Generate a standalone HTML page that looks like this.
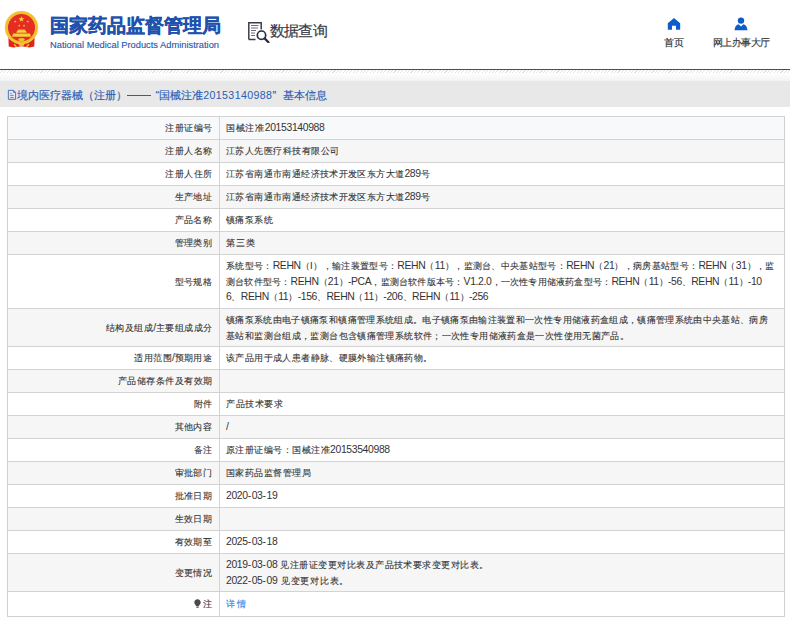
<!DOCTYPE html>
<html><head><meta charset="utf-8">
<style>
*{box-sizing:border-box;margin:0;padding:0}
html,body{width:790px;height:620px;overflow:hidden;background:#fff;font-family:"Liberation Sans",sans-serif;color:#333}
.hdr{position:absolute;left:0;top:0;width:790px;height:69px;background:#fff}
.emb{position:absolute;left:0;top:0;width:45px;height:55px}
.t1{position:absolute;left:50px;top:12.5px;font-size:19px;font-weight:bold;color:#1f52ad;-webkit-text-stroke:0.35px #1f52ad;white-space:nowrap;line-height:26px}
.t2{position:absolute;left:50px;top:38.6px;font-size:9.3px;color:#2a5bb0;-webkit-text-stroke:0.15px #2a5bb0;white-space:nowrap;line-height:12px}
.dq{position:absolute;left:248px;top:22px;width:22px;height:21px}
.dqt{position:absolute;left:270px;top:20px;font-size:14.5px;letter-spacing:-0.8px;color:#3a3a46;-webkit-text-stroke:0.2px #3a3a46;white-space:nowrap;line-height:22px}
.nav{position:absolute;font-size:10px;color:#333;-webkit-text-stroke:0.15px #333;white-space:nowrap;line-height:10px}
.bl{position:absolute;left:0;top:69px;width:790px;height:1px;background:#0a5cb8}
.hatch{position:absolute;left:0;top:70px;width:790px;height:3px;background:repeating-linear-gradient(135deg,#fff 0,#fff 1.6px,#e2e2e2 1.6px,#e2e2e2 2.4px)}
.grad{position:absolute;left:0;top:73px;width:790px;height:8px;background:linear-gradient(#fff,#f3f3f3)}
.bar{position:absolute;left:0;top:81px;width:790px;height:26px;background:#e8e8e8}
.crumb{position:absolute;top:87px;font-size:11px;color:#2a5db5;-webkit-text-stroke:0.15px #2a5db5;white-space:nowrap;line-height:16px}
.cn{font-size:10.6px;letter-spacing:0.4px;-webkit-text-stroke:0}
.dicon{position:absolute;left:7px;top:89px;width:10px;height:12px}
.tbl{position:absolute;left:7px;top:116px;width:778px;height:501px;border-left:1px solid #d0d0d0;border-right:1px solid #d0d0d0;font-size:9.4px;color:#333;-webkit-text-stroke:0.1px #333}
.row{position:absolute;left:0;width:776px;border-top:1px solid #d3d3d3;display:flex;align-items:center}
.lc{width:212px;flex:none;text-align:right;padding-right:7.6px;letter-spacing:0.45px;line-height:15.6px;white-space:nowrap}
.rc{padding-left:6px;white-space:nowrap}
.ln{line-height:15.6px;height:15.6px}
.n{font-size:10.4px;letter-spacing:-0.35px;-webkit-text-stroke:0}
.h{letter-spacing:0.5px}
.bot{position:absolute;left:0;top:500px;width:776px;height:1px;background:#d0d0d0}
.vl{position:absolute;left:211px;top:0;width:1px;height:500px;background:#d3d3d3}
.bulb{display:inline-block;vertical-align:-1px;margin-right:1.5px}
a{color:#3c8ce8;text-decoration:none;-webkit-text-stroke:0.2px #3c8ce8}
</style></head><body>
<div class="hdr">
  <svg class="emb" viewBox="0 0 45 55">
    <path d="M8.4 36.5 L34.6 36.5 L34.3 46.6 L29.5 47.4 L21.5 46.2 L13.5 47.4 L8.7 46.6 Z" fill="#e0241b"/>
    <circle cx="21.5" cy="27.6" r="14" fill="#e52e22"/>
    <circle cx="21.5" cy="27.6" r="15.1" fill="none" stroke="#f0bf2c" stroke-width="3.1"/>
    <circle cx="21.5" cy="27.6" r="16.4" fill="none" stroke="#f8d460" stroke-width="0.6"/>
    <path d="M8.4 36.5 L34.6 36.5 L34.4 41 Q21.5 47 8.6 41 Z" fill="#e0241b" opacity="0"/>
    <path d="M21.40,16.20 L22.13,18.29 L24.35,18.34 L22.59,19.69 L23.22,21.81 L21.40,20.55 L19.58,21.81 L20.21,19.69 L18.45,18.34 L20.67,18.29Z" fill="#f5d13c"/>
    <path d="M15.30,20.15 L15.62,21.06 L16.58,21.08 L15.82,21.67 L16.09,22.59 L15.30,22.05 L14.51,22.59 L14.78,21.67 L14.02,21.08 L14.98,21.06Z" fill="#f5d13c"/>
    <path d="M27.80,20.15 L28.12,21.06 L29.08,21.08 L28.32,21.67 L28.59,22.59 L27.80,22.05 L27.01,22.59 L27.28,21.67 L26.52,21.08 L27.48,21.06Z" fill="#f5d13c"/>
    <path d="M19.20,24.25 L19.52,25.16 L20.48,25.18 L19.72,25.77 L19.99,26.69 L19.20,26.15 L18.41,26.69 L18.68,25.77 L17.92,25.18 L18.88,25.16Z" fill="#f5d13c"/>
    <path d="M24.00,24.25 L24.32,25.16 L25.28,25.18 L24.52,25.77 L24.79,26.69 L24.00,26.15 L23.21,26.69 L23.48,25.77 L22.72,25.18 L23.68,25.16Z" fill="#f5d13c"/>
    <path d="M16.2 32.8 L17.3 30.6 H25.7 L26.8 32.8 Z" fill="#f5d13c"/>
    <rect x="18" y="29.6" width="7" height="1.2" fill="#f5d13c"/>
    <path d="M12 36.8 L13 33.6 H30 L31 36.8 Z" fill="#f5d13c"/>
    <ellipse cx="21.5" cy="39.6" rx="3.2" ry="1.5" fill="#f2c12e"/>
    <ellipse cx="21.5" cy="44.6" rx="2.9" ry="1.5" fill="#f2c12e"/>
    <path d="M14 44.2 L16.5 46.8 M29 44.2 L26.5 46.8" stroke="#f2c12e" stroke-width="1.3"/>
  </svg>
  <div class="t1">国家药品监督管理局</div>
  <div class="t2">National Medical Products Administration</div>
  <svg class="dq" viewBox="0 0 22 21">
    <path d="M0.8 17.5 V0.8 H13.2 V7.5" stroke="#3c3c50" stroke-width="1.5" fill="none"/>
    <path d="M0.8 17.5 H7.5" stroke="#3c3c50" stroke-width="1.5" fill="none"/>
    <path d="M3 3.5 H10.5 M3 6 H10 M3 8.5 H8 M3 11 H7 M3 13.5 H7" stroke="#6a6a78" stroke-width="1.1" fill="none"/>
    <circle cx="13.5" cy="13.2" r="4.2" stroke="#2c2c40" stroke-width="1.7" fill="none"/>
    <path d="M16.6 16.4 L20.5 20.3" stroke="#2c2c40" stroke-width="2.2" stroke-linecap="round"/>
  </svg>
  <div class="dqt">数据查询</div>
  <svg style="position:absolute;left:667px;top:17px" width="14" height="14" viewBox="0 0 14 14"><path d="M7 1 L13.2 6.2 V12.7 H9 V8.8 H5 V12.7 H0.8 V6.2 Z" fill="#0d5ccc"/></svg>
  <div class="nav" style="left:664px;top:38px;letter-spacing:-0.5px">首页</div>
  <svg style="position:absolute;left:734px;top:16px" width="14" height="15" viewBox="0 0 14 15"><circle cx="7" cy="4.6" r="3.2" fill="#0d5ccc"/><path d="M0.6 14.2 Q0.8 9.2 4.6 8.2 L7 10.4 L9.4 8.2 Q13.2 9.2 13.4 14.2 Z" fill="#0d5ccc"/></svg>
  <div class="nav" style="left:712.5px;top:38px;letter-spacing:-0.5px">网上办事大厅</div>
</div>
<div class="bl"></div>
<div class="hatch"></div>
<div class="grad"></div>
<div class="bar"></div>
<svg class="dicon" viewBox="0 0 10 12"><path d="M1.35 1.35 H6.6 L8.6 3.4 V10.35 H1.35 Z M6.6 1.35 V3.4 H8.6" stroke="#4a72c8" stroke-width="1" fill="none"/><path d="M3.2 4.4 H4.7 M3.2 6.4 H6.7 M3.2 8.5 H6.7" stroke="#5a76c8" stroke-width="0.9"/></svg>
<div class="crumb" style="left:17px">境内医疗器械（注册）</div>
<div style="position:absolute;left:127px;top:95px;width:23.5px;height:1px;background:#2a5db5"></div>
<div class="crumb" style="left:155.5px">“国械注准<span class="cn">20153140988</span>”</div>
<div class="crumb" style="left:283px">基本信息</div>

<div class="tbl">
<div class="row" style="top:0px;height:23px;background:#f8f9fb"><div class="lc">注册证编号</div><div class="rc"><div class="ln" style="letter-spacing:0.686px">国械注准<span class="n">20153140988</span></div></div></div>
<div class="row" style="top:23px;height:23px;background:#f6f6f6"><div class="lc">注册人名称</div><div class="rc"><div class="ln" style="letter-spacing:0.487px">江苏人先医疗科技有限公司</div></div></div>
<div class="row" style="top:46px;height:23px;background:#fff"><div class="lc">注册人住所</div><div class="rc"><div class="ln" style="letter-spacing:0.390px">江苏省南通市南通经济技术开发区东方大道<span class="n">289</span>号</div></div></div>
<div class="row" style="top:69px;height:23px;background:#f6f6f6"><div class="lc">生产地址</div><div class="rc"><div class="ln" style="letter-spacing:0.390px">江苏省南通市南通经济技术开发区东方大道<span class="n">289</span>号</div></div></div>
<div class="row" style="top:92px;height:23px;background:#fff"><div class="lc">产品名称</div><div class="rc"><div class="ln" style="letter-spacing:0.444px">镇痛泵系统</div></div></div>
<div class="row" style="top:115px;height:23px;background:#f6f6f6"><div class="lc">管理类别</div><div class="rc"><div class="ln" style="letter-spacing:1.200px">第三类</div></div></div>
<div class="row" style="top:138px;height:54px;background:#fff"><div class="lc">型号规格</div><div class="rc"><div class="ln" style="letter-spacing:0.331px">系统型号：<span class="n">REHN</span>（Ⅰ），输注装置型号：<span class="n">REHN</span>（<span class="n">11</span>），监测台、中央基站型号：<span class="n">REHN</span>（<span class="n">21</span>），病房基站型号：<span class="n">REHN</span>（<span class="n">31</span>），监</div><div class="ln" style="letter-spacing:0.219px">测台软件型号：<span class="n">REHN</span>（<span class="n">21</span>）<span class="n">-PCA</span>，监测台软件版本号：<span class="n">V1.2.0</span>，一次性专用储液药盒型号：<span class="n">REHN</span>（<span class="n">11</span>）<span class="n">-56</span>、<span class="n">REHN</span>（<span class="n">11</span>）<span class="n">-10</span></div><div class="ln" style="letter-spacing:0.353px"><span class="n">6</span>、<span class="n">REHN</span>（<span class="n">11</span>）<span class="n">-156</span>、<span class="n">REHN</span>（<span class="n">11</span>）<span class="n">-206</span>、<span class="n">REHN</span>（<span class="n">11</span>）<span class="n">-256</span></div></div></div>
<div class="row" style="top:192px;height:38px;background:#f6f6f6"><div class="lc">结构及组成<span class="n">/</span>主要组成成分</div><div class="rc"><div class="ln" style="letter-spacing:0.348px">镇痛泵系统由电子镇痛泵和镇痛管理系统组成。电子镇痛泵由输注装置和一次性专用储液药盒组成，镇痛管理系统由中央基站、病房</div><div class="ln" style="letter-spacing:0.376px">基站和监测台组成，监测台包含镇痛管理系统软件；一次性专用储液药盒是一次性使用无菌产品。</div></div></div>
<div class="row" style="top:230px;height:23px;background:#fff"><div class="lc">适用范围<span class="n">/</span>预期用途</div><div class="rc"><div class="ln" style="letter-spacing:0.391px">该产品用于成人患者静脉、硬膜外输注镇痛药物。</div></div></div>
<div class="row" style="top:253px;height:23px;background:#f6f6f6"><div class="lc">产品储存条件及有效期</div><div class="rc"></div></div>
<div class="row" style="top:276px;height:23px;background:#fff"><div class="lc">附件</div><div class="rc"><div class="ln" style="letter-spacing:0.545px">产品技术要求</div></div></div>
<div class="row" style="top:299px;height:23px;background:#f6f6f6"><div class="lc">其他内容</div><div class="rc"><div class="ln"><span class="n">/</span></div></div></div>
<div class="row" style="top:322px;height:23px;background:#fff"><div class="lc">备注</div><div class="rc"><div class="ln" style="letter-spacing:0.457px">原注册证编号：国械注准<span class="n">20153540988</span></div></div></div>
<div class="row" style="top:345px;height:23px;background:#f6f6f6"><div class="lc">审批部门</div><div class="rc"><div class="ln" style="letter-spacing:0.471px">国家药品监督管理局</div></div></div>
<div class="row" style="top:368px;height:23px;background:#fff"><div class="lc">批准日期</div><div class="rc"><div class="ln"><span class="n">2020<span class="h">-</span>03<span class="h">-</span>19</span></div></div></div>
<div class="row" style="top:391px;height:23px;background:#f6f6f6"><div class="lc">生效日期</div><div class="rc"></div></div>
<div class="row" style="top:414px;height:23px;background:#fff"><div class="lc">有效期至</div><div class="rc"><div class="ln"><span class="n">2025<span class="h">-</span>03<span class="h">-</span>18</span></div></div></div>
<div class="row" style="top:437px;height:38px;background:#f6f6f6"><div class="lc">变更情况</div><div class="rc"><div class="ln" style="letter-spacing:0.465px"><span class="n">2019<span class="h">-</span>03<span class="h">-</span>08</span> 见注册证变更对比表及产品技术要求变更对比表。</div><div class="ln" style="letter-spacing:0.769px"><span class="n">2022<span class="h">-</span>05<span class="h">-</span>09</span> 见变更对比表。</div></div></div>
<div class="row" style="top:475px;height:25px;background:#fff"><div class="lc"><svg class="bulb" width="7" height="9" viewBox="0 0 7 9"><path d="M3.5 0.3 C1.5 0.3 0.3 1.7 0.3 3.4 C0.3 4.9 1.6 5.6 2.2 7 L4.8 7 C5.4 5.6 6.7 4.9 6.7 3.4 C6.7 1.7 5.5 0.3 3.5 0.3Z M2.3 7.6 H4.7 V8.7 H2.3Z" fill="#4a4a4a"/></svg>注</div><div class="rc"><div class="ln" style="letter-spacing:1.800px"><a>详情</a></div></div></div>
<div class="bot"></div><div class="vl"></div></div><!--tblend-->
</body></html>
